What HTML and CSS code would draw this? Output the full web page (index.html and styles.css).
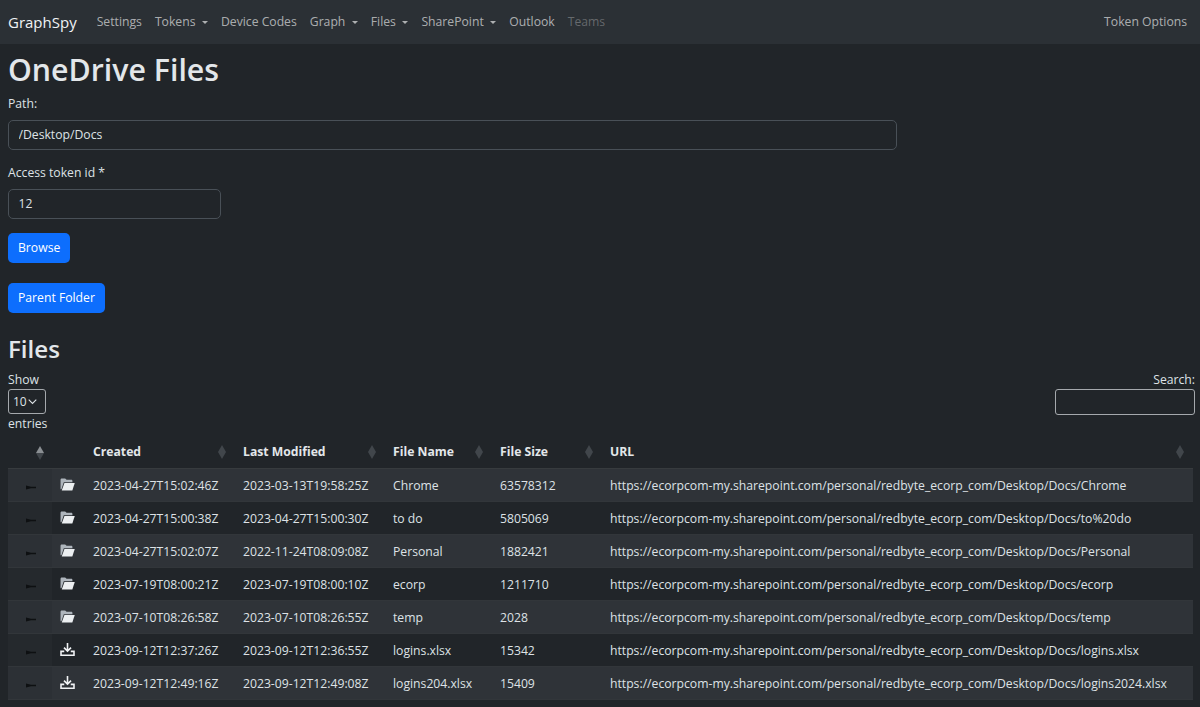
FILE: index.html
```html
<!DOCTYPE html>
<html lang="en">
<head>
<meta charset="utf-8">
<title>GraphSpy - OneDrive Files</title>
<link rel="stylesheet" href="styles.css">
</head>
<body>
<nav class="navbar">
  <a class="brand">GraphSpy</a>
  <a class="nav-link">Settings</a>
  <a class="nav-link caret">Tokens</a>
  <a class="nav-link">Device Codes</a>
  <a class="nav-link caret">Graph</a>
  <a class="nav-link caret">Files</a>
  <a class="nav-link caret">SharePoint</a>
  <a class="nav-link">Outlook</a>
  <a class="nav-link disabled">Teams</a>
  <a class="nav-link end">Token Options</a>
</nav>
<main class="page">
  <h1>OneDrive Files</h1>
  <form class="form">
    <label class="label" for="path">Path:</label>
    <input class="input path" id="path" value="/Desktop/Docs">
    <label class="label token-label" for="token">Access token id *</label>
    <input class="input token" id="token" value="12">
    <button class="btn browse" type="button">Browse</button>
    <button class="btn parent" type="button">Parent Folder</button>
  </form>
  <h2>Files</h2>
  <div class="controls">
    <div class="length">
      <div>Show</div>
      <div class="select">10<svg width="9" height="6" viewBox="0 0 9 6"><path d="M.7.7l3.800 3.800L8.300.7" fill="none" stroke="#dee2e6" stroke-width="1.100"/></svg></div>
      <div>entries</div>
    </div>
    <div class="search">
      <div>Search:</div>
      <div class="search-box"></div>
    </div>
  </div>
  <table class="table">
    <colgroup>
      <col class="c1"><col class="c2"><col class="c3"><col class="c4"><col class="c5"><col class="c6"><col>
    </colgroup>
    <thead>
      <tr>
        <th class="first"><span class="sort asc"></span></th>
        <th></th>
        <th><span class="th">Created<span class="sort"></span></span></th>
        <th><span class="th">Last Modified<span class="sort"></span></span></th>
        <th><span class="th">File Name<span class="sort"></span></span></th>
        <th><span class="th">File Size<span class="sort"></span></span></th>
        <th><span class="th">URL<span class="sort"></span></span></th>
      </tr>
    </thead>
    <tbody>
      <tr>
        <td class="center"><svg class="pin" viewBox="0 0 12 6"><path d="M0 .6l6 1.400h6v1.800H6L0 5.400z" fill="#0e1012"/></svg></td>
        <td class="center"><svg class="ico" viewBox="0 0 16 14"><path d="M.5 12V2C.5 1 1.200.5 2 .5h3.500L7 2h5c.8 0 1.300.5 1.300 1.200V4.500H4L1.500 12z" fill="#aeb5bc"/><path d="M4.700 5.500H15.800L13.200 13.500H1.800z" fill="#eceff1"/></svg></td>
        <td>2023-04-27T15:02:46Z</td><td>2023-03-13T19:58:25Z</td><td>Chrome</td><td>63578312</td><td>https://ecorpcom-my.sharepoint.com/personal/redbyte_ecorp_com/Desktop/Docs/Chrome</td>
      </tr>
      <tr>
        <td class="center"><svg class="pin" viewBox="0 0 12 6"><path d="M0 .6l6 1.400h6v1.800H6L0 5.400z" fill="#0e1012"/></svg></td>
        <td class="center"><svg class="ico" viewBox="0 0 16 14"><path d="M.5 12V2C.5 1 1.200.5 2 .5h3.500L7 2h5c.8 0 1.300.5 1.300 1.200V4.500H4L1.500 12z" fill="#aeb5bc"/><path d="M4.700 5.500H15.800L13.200 13.500H1.800z" fill="#eceff1"/></svg></td>
        <td>2023-04-27T15:00:38Z</td><td>2023-04-27T15:00:30Z</td><td>to do</td><td>5805069</td><td>https://ecorpcom-my.sharepoint.com/personal/redbyte_ecorp_com/Desktop/Docs/to%20do</td>
      </tr>
      <tr>
        <td class="center"><svg class="pin" viewBox="0 0 12 6"><path d="M0 .6l6 1.400h6v1.800H6L0 5.400z" fill="#0e1012"/></svg></td>
        <td class="center"><svg class="ico" viewBox="0 0 16 14"><path d="M.5 12V2C.5 1 1.200.5 2 .5h3.500L7 2h5c.8 0 1.300.5 1.300 1.200V4.500H4L1.500 12z" fill="#aeb5bc"/><path d="M4.700 5.500H15.800L13.200 13.500H1.800z" fill="#eceff1"/></svg></td>
        <td>2023-04-27T15:02:07Z</td><td>2022-11-24T08:09:08Z</td><td>Personal</td><td>1882421</td><td>https://ecorpcom-my.sharepoint.com/personal/redbyte_ecorp_com/Desktop/Docs/Personal</td>
      </tr>
      <tr>
        <td class="center"><svg class="pin" viewBox="0 0 12 6"><path d="M0 .6l6 1.400h6v1.800H6L0 5.400z" fill="#0e1012"/></svg></td>
        <td class="center"><svg class="ico" viewBox="0 0 16 14"><path d="M.5 12V2C.5 1 1.200.5 2 .5h3.500L7 2h5c.8 0 1.300.5 1.300 1.200V4.500H4L1.500 12z" fill="#aeb5bc"/><path d="M4.700 5.500H15.800L13.200 13.500H1.800z" fill="#eceff1"/></svg></td>
        <td>2023-07-19T08:00:21Z</td><td>2023-07-19T08:00:10Z</td><td>ecorp</td><td>1211710</td><td>https://ecorpcom-my.sharepoint.com/personal/redbyte_ecorp_com/Desktop/Docs/ecorp</td>
      </tr>
      <tr>
        <td class="center"><svg class="pin" viewBox="0 0 12 6"><path d="M0 .6l6 1.400h6v1.800H6L0 5.400z" fill="#0e1012"/></svg></td>
        <td class="center"><svg class="ico" viewBox="0 0 16 14"><path d="M.5 12V2C.5 1 1.200.5 2 .5h3.500L7 2h5c.8 0 1.300.5 1.300 1.200V4.500H4L1.500 12z" fill="#aeb5bc"/><path d="M4.700 5.500H15.800L13.200 13.500H1.800z" fill="#eceff1"/></svg></td>
        <td>2023-07-10T08:26:58Z</td><td>2023-07-10T08:26:55Z</td><td>temp</td><td>2028</td><td>https://ecorpcom-my.sharepoint.com/personal/redbyte_ecorp_com/Desktop/Docs/temp</td>
      </tr>
      <tr>
        <td class="center"><svg class="pin" viewBox="0 0 12 6"><path d="M0 .6l6 1.400h6v1.800H6L0 5.400z" fill="#0e1012"/></svg></td>
        <td class="center"><svg class="ico" viewBox="0 0 16 14"><path d="M8 0v8.500M4.200 5L8 8.800 11.800 5" fill="none" stroke="#f1f3f5" stroke-width="1.700"/><path d="M4.500 9H1v4.200h14V9h-3.500" fill="none" stroke="#f1f3f5" stroke-width="1.700"/></svg></td>
        <td>2023-09-12T12:37:26Z</td><td>2023-09-12T12:36:55Z</td><td>logins.xlsx</td><td>15342</td><td>https://ecorpcom-my.sharepoint.com/personal/redbyte_ecorp_com/Desktop/Docs/logins.xlsx</td>
      </tr>
      <tr>
        <td class="center"><svg class="pin" viewBox="0 0 12 6"><path d="M0 .6l6 1.400h6v1.800H6L0 5.400z" fill="#0e1012"/></svg></td>
        <td class="center"><svg class="ico" viewBox="0 0 16 14"><path d="M8 0v8.500M4.200 5L8 8.800 11.800 5" fill="none" stroke="#f1f3f5" stroke-width="1.700"/><path d="M4.500 9H1v4.200h14V9h-3.500" fill="none" stroke="#f1f3f5" stroke-width="1.700"/></svg></td>
        <td>2023-09-12T12:49:16Z</td><td>2023-09-12T12:49:08Z</td><td>logins204.xlsx</td><td>15409</td><td>https://ecorpcom-my.sharepoint.com/personal/redbyte_ecorp_com/Desktop/Docs/logins2024.xlsx</td>
      </tr>
    </tbody>
  </table>
</main>
</body>
</html>
```

FILE: styles.css
```css
* { box-sizing: border-box; }
html, body { margin: 0; height: 100%; }
body {
  background: #212529;
  color: #dee2e6;
  font-family: "Open Sans", "Noto Sans", sans-serif;
  font-size: 12.2px;
  line-height: 1.5;
  overflow: hidden;
}
.navbar {
  display: flex;
  align-items: center;
  gap: 13px;
  height: 44px;
  padding: 1px 13px 0 8px;
  background: #2b3035;
}
.brand { color: #f1f3f5; font-size: 15px; margin-right: 7px; }
.nav-link { color: rgba(255,255,255,.62); font-size: 12.2px; }
.nav-link.disabled { color: rgba(255,255,255,.28); }
.nav-link.end { margin-left: auto; }
.caret::after {
  content: "";
  display: inline-block;
  margin-left: 6.500px;
  vertical-align: 2px;
  border-top: 3.5px solid;
  border-left: 3.5px solid transparent;
  border-right: 3.5px solid transparent;
}
.page { padding: 0 5px 0 8px; }
h1 { margin: 4px 0 0; font-size: 30.300px; font-weight: 600; line-height: 43px; color: #e3e7ea; }
.form { display: flex; flex-direction: column; align-items: flex-start; }
.label { margin-top: 3px; line-height: 20px; }
.token-label { margin-top: 13px; }
.input {
  display: block;
  height: 30px;
  margin-top: 6px;
  padding: 0 10px 2px 9.500px;
  background: #212529;
  color: #dee2e6;
  border: 1px solid #495057;
  border-radius: 5px;
  font: inherit;
}
.path { width: 889px; }
.token { width: 213px; }
.btn {
  height: 30px;
  padding: 0 10px;
  border: 0;
  border-radius: 5px;
  background: #0d6efd;
  color: #fff;
  font: inherit;
}
.browse { margin-top: 14px; }
.parent { margin-top: 20px; }
h2 { margin: 18px 0 0; font-size: 24.100px; font-weight: 600; line-height: 36px; color: #e3e7ea; }
.controls { display: flex; justify-content: space-between; align-items: flex-start; margin-top: 3px; line-height: 19px; }
.select {
  display: flex;
  align-items: center;
  gap: 1px;
  width: 38px;
  height: 25px;
  padding-left: 4px;
  border: 1px solid #a5a9ad;
  border-radius: 3px;
  font-size: 12px;
}
.search { text-align: right; }
.search-box {
  width: 140px;
  height: 26px;
  border: 1px solid #a5a9ad;
  border-radius: 3px;
}
.table { width: 1185px; border-collapse: collapse; table-layout: fixed; margin-top: 3px; }
.c1 { width: 44px; }
.c2 { width: 33px; }
.c3 { width: 150px; }
.c4 { width: 150px; }
.c5 { width: 107px; }
.c6 { width: 110px; }
th {
  height: 32px;
  padding: 1px 8px 0;
  text-align: left;
  font-weight: 700;
  color: #e3e7ea;
  border-bottom: 1px solid #373b3e;
}
th.first { padding: 1px 7px 0 0; text-align: right; }
.th { display: flex; justify-content: space-between; align-items: center; }
td {
  height: 33px;
  padding: 3px 8px 0;
  white-space: nowrap;
  border-bottom: 1px solid #32363a;
}
tbody tr:nth-child(odd) { background: #2f3338; }
td.center { padding: 2px 0 0; }
tbody tr:nth-child(odd) td:first-child { background: #2c3035; }
tbody tr:nth-child(even) td:first-child { background: #25292d; }
.sort { position: relative; display: inline-block; width: 9px; height: 14px; vertical-align: middle; }
.sort::before, .sort::after {
  content: "";
  position: absolute;
  left: 0;
  border-left: 4.500px solid transparent;
  border-right: 4.500px solid transparent;
}
.sort::before { top: 0; border-bottom: 7px solid #41464b; }
.sort::after { bottom: 0; border-top: 7px solid #41464b; }
.sort.asc::before { border-bottom-color: #8b8f93; }
.pin { display: block; width: 10px; height: 5px; margin: 3px 0 0 18px; }
.ico { display: block; width: 15px; height: 13px; margin: -3px 0 0 8px; }
```
